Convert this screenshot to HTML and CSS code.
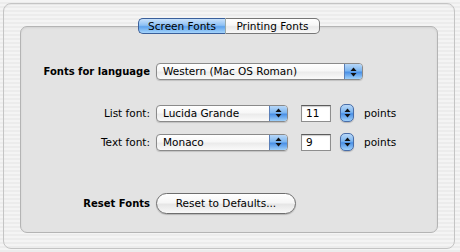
FILE: index.html
```html
<!DOCTYPE html>
<html>
<head>
    <title>Fonts</title>
    <link rel="stylesheet" href="styles.css">
</head>
<body>
    <div class="window">
        <!-- Tabs sit over the panel's top edge -->
        <div class="tabs">
            <div class="tab tab-selected">Screen Fonts</div>
            <div class="tab">Printing Fonts</div>
        </div>

        <div class="panel">
            <div class="row row-language">
                <span class="label bold">Fonts for language</span>
                <div class="popup popup-wide">
                    <span class="popup-text">Western (Mac OS Roman)</span>
                    <span class="popup-arrows">
                        <svg width="7" height="10" viewBox="0 0 7 10"><polygon points="3.5 0.5, 6.5 4, 0.5 4" fill="#111"/><polygon points="0.5 6, 6.5 6, 3.5 9.5" fill="#111"/></svg>
                    </span>
                </div>
            </div>

            <div class="row row-list">
                <span class="label">List font:</span>
                <div class="popup popup-font">
                    <span class="popup-text">Lucida Grande</span>
                    <span class="popup-arrows">
                        <svg width="7" height="10" viewBox="0 0 7 10"><polygon points="3.5 0.5, 6.5 4, 0.5 4" fill="#111"/><polygon points="0.5 6, 6.5 6, 3.5 9.5" fill="#111"/></svg>
                    </span>
                </div>
                <div class="field">11</div>
                <div class="stepper">
                    <svg width="7" height="10" viewBox="0 0 7 10"><polygon points="3.5 0.5, 6.5 4, 0.5 4" fill="#111"/><polygon points="0.5 6, 6.5 6, 3.5 9.5" fill="#111"/></svg>
                </div>
                <span class="unit">points</span>
            </div>

            <div class="row row-text">
                <span class="label">Text font:</span>
                <div class="popup popup-font">
                    <span class="popup-text">Monaco</span>
                    <span class="popup-arrows">
                        <svg width="7" height="10" viewBox="0 0 7 10"><polygon points="3.5 0.5, 6.5 4, 0.5 4" fill="#111"/><polygon points="0.5 6, 6.5 6, 3.5 9.5" fill="#111"/></svg>
                    </span>
                </div>
                <div class="field">9</div>
                <div class="stepper">
                    <svg width="7" height="10" viewBox="0 0 7 10"><polygon points="3.5 0.5, 6.5 4, 0.5 4" fill="#111"/><polygon points="0.5 6, 6.5 6, 3.5 9.5" fill="#111"/></svg>
                </div>
                <span class="unit">points</span>
            </div>

            <div class="row row-reset">
                <span class="label bold">Reset Fonts</span>
                <div class="button">Reset to Defaults...</div>
            </div>
        </div>
    </div>
</body>
</html>
```

FILE: styles.css
```css
body {
    margin: 0;
    font-family: "DejaVu Sans", Verdana, sans-serif;
    font-size: 10.5px;
    color: #000;
    background: repeating-linear-gradient(#f4f4f4 0 2px, #ececec 2px 4px);
}

.window {
    margin: 3px;
    width: 450px;
    height: 230px;
    border: 1px solid #c4c4c4;
    border-radius: 8px;
    box-shadow: inset 0 1px 1px rgba(0,0,0,0.06);
    padding-top: 14px;
}

.tabs {
    display: flex;
    justify-content: center;
    position: relative;
    z-index: 1;
    margin-left: 16px;
    width: 418px;
}

.tab {
    height: 14px;
    line-height: 14px;
    padding: 0 9px;
    border: 1px solid #777;
    background: linear-gradient(#ffffff, #f6f6f6 45%, #e9e9e9 55%, #f8f8f8);
    width: 75px;
    text-align: center;
}

.tab:first-child {
    border-radius: 5px 0 0 5px;
    border-right: none;
    width: 68px;
}

.tab:last-child {
    border-radius: 0 5px 5px 0;
    border-left: 1px solid #9aa;
}

.tab-selected {
    border-color: #3a5f9a;
    background: linear-gradient(#c9e1fa, #8ec1f4 45%, #5fa3ec 55%, #a4d4fc);
}

.panel {
    margin: -8px 0 0 16px;
    width: 416px;
    height: 169px;
    border: 1px solid #b4b4b4;
    border-radius: 7px;
    background: #e3e3e3;
    box-shadow: inset 0 1px 2px rgba(0,0,0,0.08);
    padding-top: 36px;
}

.row {
    display: flex;
    align-items: center;
    gap: 6px;
}

.row-list {
    margin-top: 24px;
}

.row-text {
    margin-top: 11px;
}

.row-reset {
    margin-top: 42px;
}

.label {
    width: 129px;
    text-align: right;
}

.bold {
    font-weight: bold;
    font-size: 10px;
}

.popup {
    display: flex;
    height: 15px;
    border: 1px solid #8a8a8a;
    border-radius: 4px;
    background: linear-gradient(#ffffff, #f7f7f7 45%, #ebebeb 55%, #fafafa);
    box-shadow: 0 1px 1px rgba(0,0,0,0.15);
    overflow: hidden;
}

.popup-wide {
    width: 205px;
}

.popup-font {
    width: 130px;
}

.popup-text {
    flex: 1;
    padding-left: 6px;
    line-height: 15px;
}

.popup-arrows {
    width: 17px;
    display: flex;
    align-items: center;
    justify-content: center;
    border-left: 1px solid #5a7fb8;
    background: linear-gradient(#b7d7f8, #7db6f0 45%, #4a90e6 55%, #9fd0fa);
}

.field {
    width: 24px;
    height: 15px;
    line-height: 15px;
    padding-left: 4px;
    margin-left: 7px;
    border: 1px solid #8e8e8e;
    border-top-color: #5c5c5c;
    background: #fff;
    box-shadow: inset 0 1px 1px rgba(0,0,0,0.2);
}

.stepper {
    width: 12px;
    height: 16px;
    margin-left: 3px;
    display: flex;
    align-items: center;
    justify-content: center;
    border: 1px solid #4a6ea8;
    border-radius: 5px;
    background: linear-gradient(#b7d7f8, #7db6f0 45%, #4a90e6 55%, #9fd0fa);
    box-shadow: 0 1px 1px rgba(0,0,0,0.2);
}

.unit {
    margin-left: 4px;
}

.button {
    width: 138px;
    height: 19px;
    line-height: 19px;
    text-align: center;
    border: 1px solid #6e6e6e;
    border-radius: 11px;
    background: linear-gradient(#ffffff, #f6f6f6 45%, #e6e6e6 55%, #f8f8f8);
    box-shadow: 0 1px 1px rgba(0,0,0,0.2);
}
```
